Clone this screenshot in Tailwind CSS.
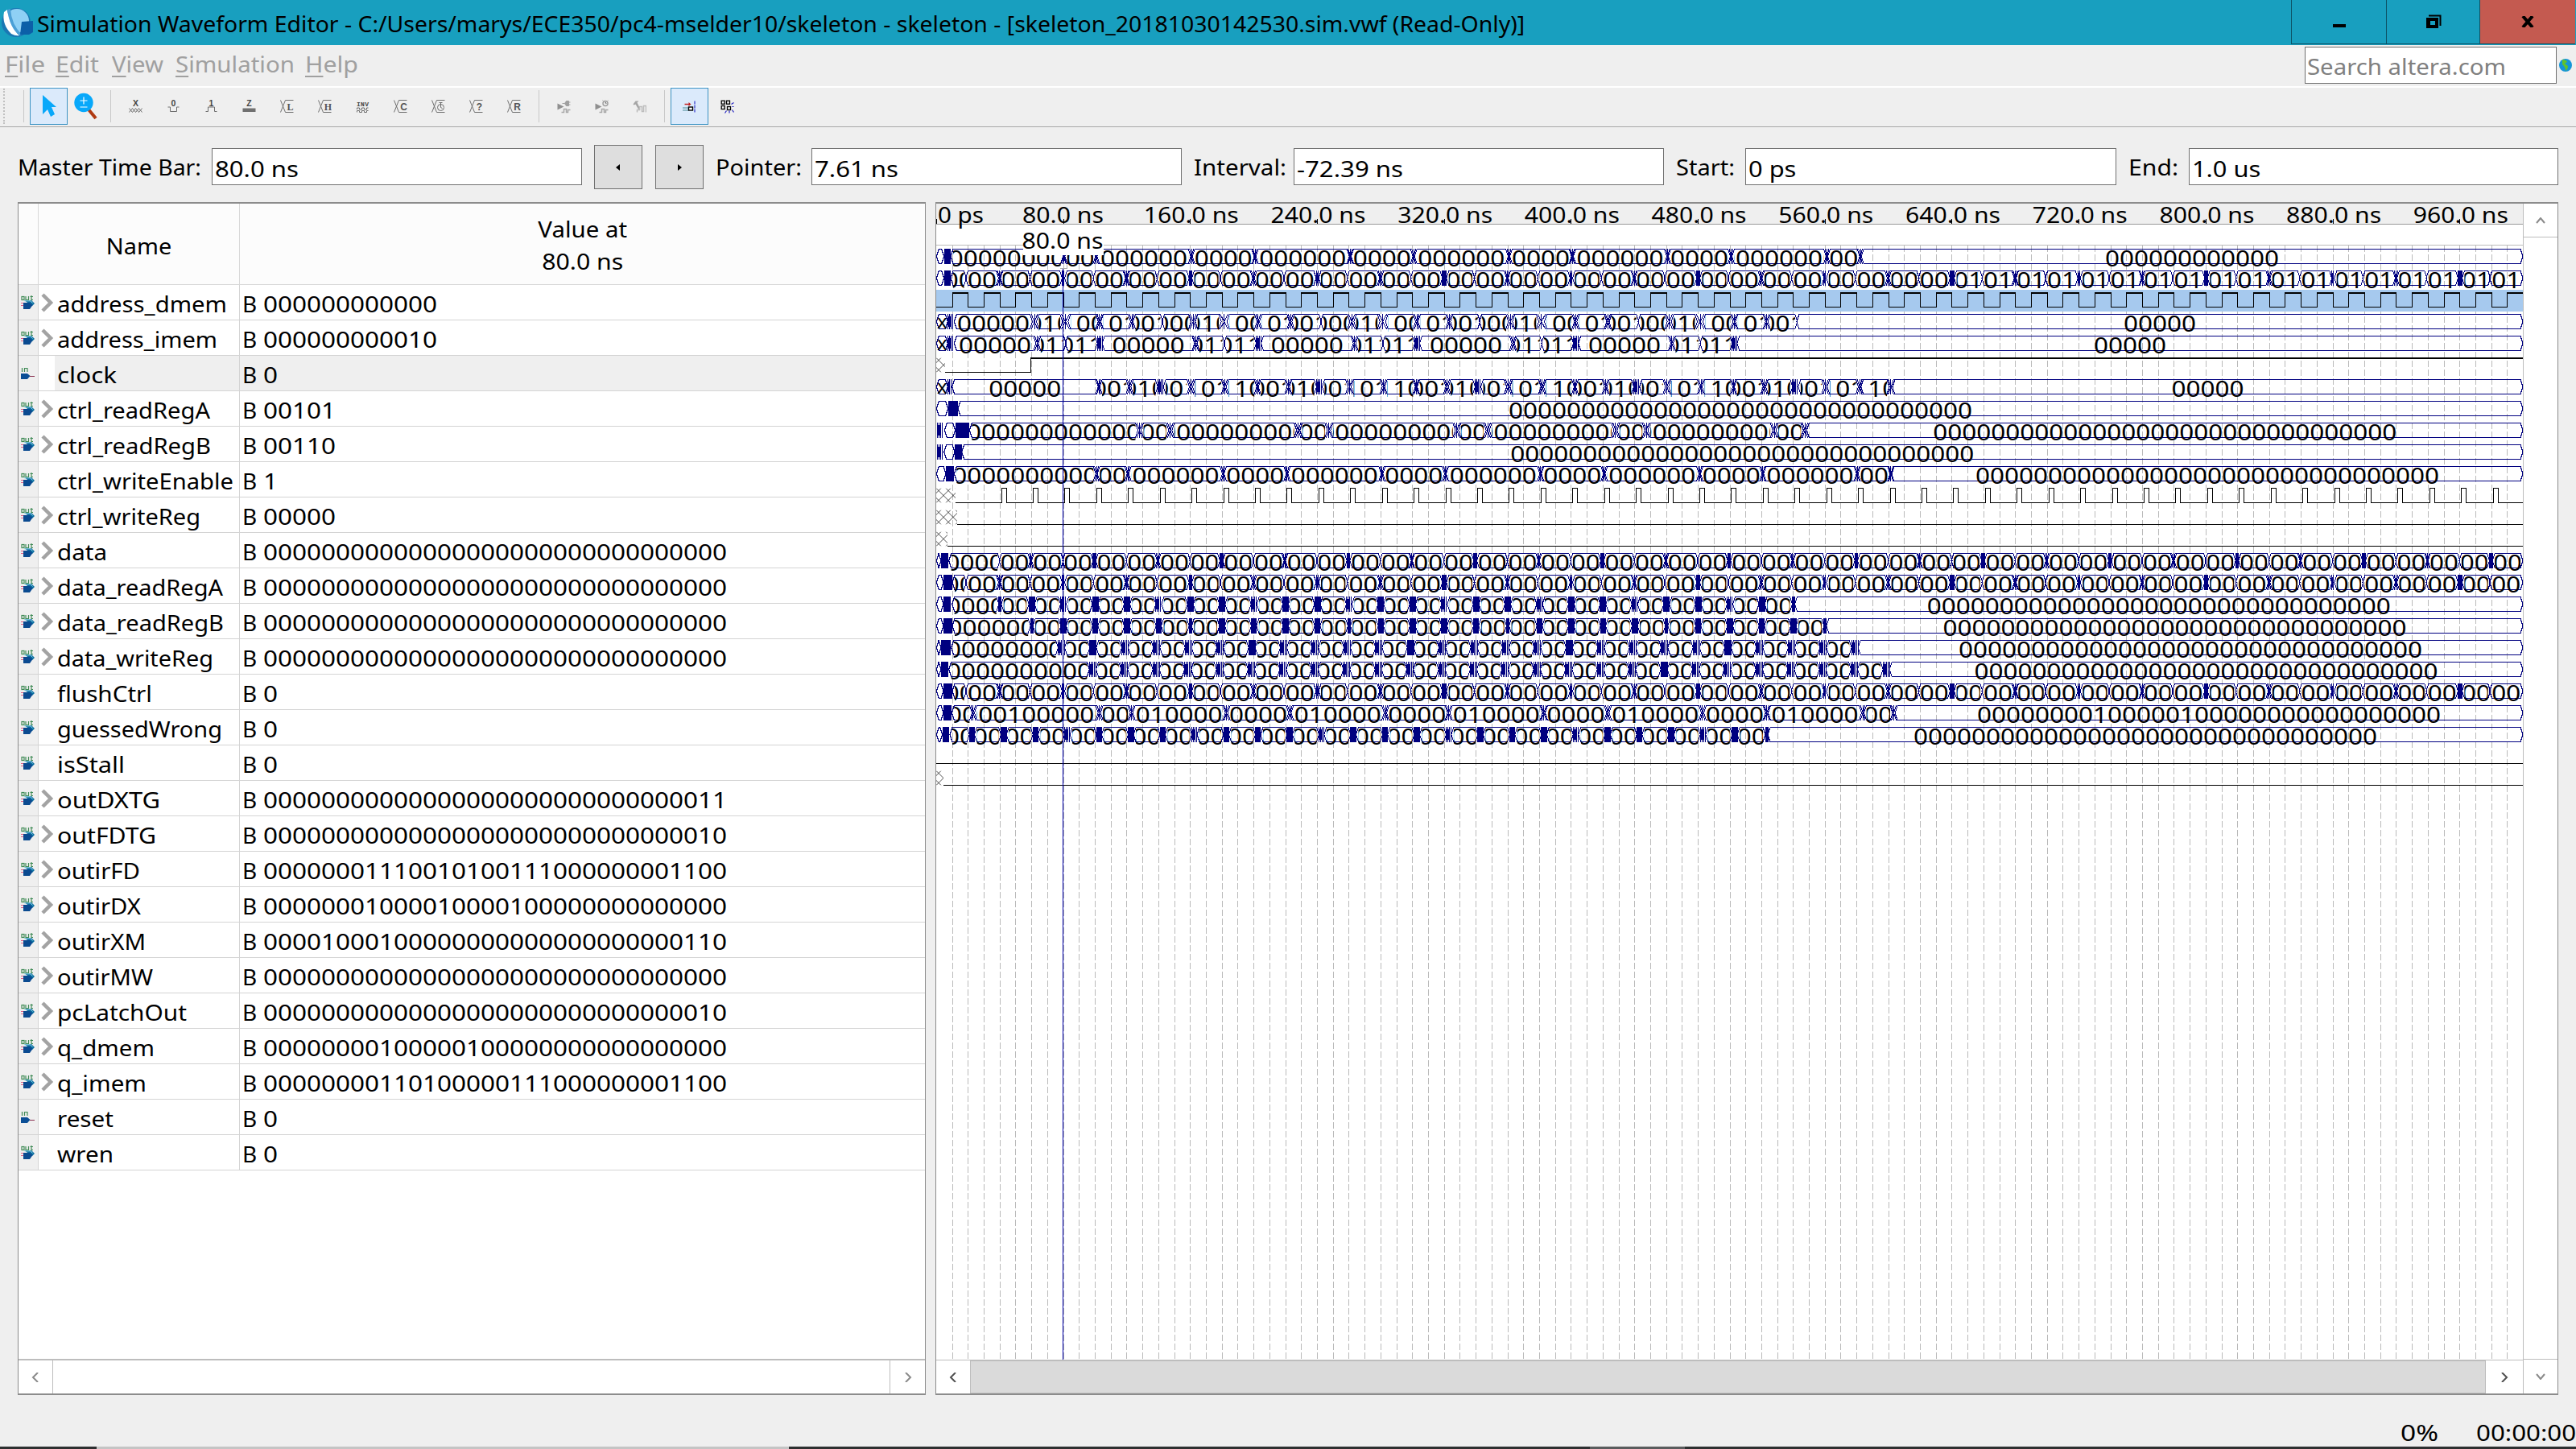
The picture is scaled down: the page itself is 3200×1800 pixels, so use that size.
<!DOCTYPE html>
<html lang="en">
<head>
<meta charset="utf-8">
<title>Simulation Waveform Editor</title>
<script src="https://cdn.jsdelivr.net/npm/@tailwindcss/browser@4"></script>
</head>
<body class="w-[3200px] h-[1800px] overflow-hidden bg-[#efefef] text-black text-[28px] leading-[40px] font-['Noto_Sans',sans-serif] flex flex-col whitespace-pre">

<!-- title bar -->
<header class="h-[56px] shrink-0 bg-[#189fbf] flex items-start">
  <svg class="w-[44px] h-[56px] shrink-0" viewBox="0 0 44 56">
    <ellipse cx="20" cy="28" rx="18" ry="18" fill="#1a78b4"/>
    <ellipse cx="21" cy="26" rx="15" ry="15" fill="#8fd0f5"/>
    <path d="M5 15Q2 30 14 42Q20 45 24 44Q12 34 9 12Z" fill="#fff"/>
    <path d="M9 12Q12 34 24 44L27 43Q14 30 13 11Z" fill="#4b9fd6"/>
    <path d="M27 27L41 26V40L36 43H25Z" fill="#0c5fa8"/>
  </svg>
  <div class="w-[2802px] h-[56px] pl-[2px] pt-[9px]"><span data-w="1848" class="inline-block origin-left">Simulation Waveform Editor - C:/Users/marys/ECE350/pc4-mselder10/skeleton - skeleton - [skeleton_20181030142530.sim.vwf (Read-Only)]</span></div>
  <div class="flex h-[55px] border-b border-l border-[#0d5365]">
    <div class="w-[118px] border-r border-[#0d5365] flex items-center justify-center"><svg class="w-[16px] h-[16px]" viewBox="0 0 16 16"><path d="M0 11h16v4H0z"/></svg></div>
    <div class="w-[116px] border-r border-[#0d5365] flex items-center justify-center"><svg class="w-[20px] h-[18px]" viewBox="0 0 20 18"><path d="M1 4h15v13H1zM6 8v5h6V8z" fill-rule="evenodd"/><path d="M4 1.5H18.5V14" fill="none" stroke="#000" stroke-width="2"/></svg></div>
    <div class="w-[118px] bg-[#c45a50] flex items-center justify-center"><svg class="w-[16px] h-[14px]" viewBox="0 0 16 14"><path d="M2 0L14 14M14 0L2 14" stroke="#000" stroke-width="4"/></svg></div>
  </div>
</header>

<!-- menu bar -->
<nav class="h-[51px] shrink-0 flex text-[#a0a0a0]">
  <div class="w-[63px] pl-[6px] pt-[3px]"><span data-w="50" class="inline-block origin-left"><u class="underline-offset-4">F</u>ile</span></div>
  <div class="w-[68px] pl-[6px] pt-[3px]"><span data-w="54" class="inline-block origin-left"><u class="underline-offset-4">E</u>dit</span></div>
  <div class="w-[80px] pl-[8px] pt-[3px]"><span data-w="64" class="inline-block origin-left"><u class="underline-offset-4">V</u>iew</span></div>
  <div class="w-[161px] pl-[7px] pt-[3px]"><span data-w="148" class="inline-block origin-left"><u class="underline-offset-4">S</u>imulation</span></div>
  <div class="pl-[7px] pt-[3px] w-[2491px]"><span data-w="66" class="inline-block origin-left"><u class="underline-offset-4">H</u>elp</span></div>
  <div class="mt-[2px] w-[313px] h-[46px] bg-white border border-[#707070] text-[#808080] pl-[2px] pt-[3px]"><span data-w="247" class="inline-block origin-left">Search altera.com</span></div>
  <svg class="w-[18px] h-[18px] ml-[2px] mt-[16px]" viewBox="0 0 18 18"><circle cx="9" cy="9" r="8" fill="#1495d8"/><path d="M5 2Q10 2 11 5L8 7L12 10Q12 14 9 16Q9 11 5 8Z" fill="#5fc22e"/></svg>
</nav>

<!-- toolbar -->
<div id="toolbar" class="h-[50px] shrink-0 border-t-2 border-white pb-[2px] flex items-center"></div>
<div class="h-[1px] shrink-0 bg-[#a8a8a8]"></div>

<!-- time fields -->
<div class="h-[93px] shrink-0 flex pt-[22px]">
  <div class="w-[241px] pl-[22px] pt-[7px] mr-[22px]"><span data-w="228" class="inline-block origin-left">Master Time Bar:</span></div>
  <div class="mt-[4px] w-[460px] h-[46px] bg-white border border-[#707070] pl-[3px] pt-[4px]"><span data-w="104" class="inline-block origin-left">80.0 ns</span></div>
  <div class="ml-[15px] w-[60px] h-[55px] bg-[#dedede] border border-[#707070] flex items-center justify-center"><svg class="w-[8px] h-[8px]" viewBox="0 0 8 8"><path d="M6 0V8L1 4z"/></svg></div>
  <div class="ml-[16px] w-[60px] h-[55px] bg-[#dedede] border border-[#707070] flex items-center justify-center"><svg class="w-[8px] h-[8px]" viewBox="0 0 8 8"><path d="M2 0V8L7 4z"/></svg></div>
  <div class="w-[134px] pl-[15px] pt-[7px]"><span data-w="107" class="inline-block origin-left">Pointer:</span></div>
  <div class="mt-[4px] w-[460px] h-[46px] bg-white border border-[#707070] pl-[3px] pt-[4px]"><span data-w="104" class="inline-block origin-left">7.61 ns</span></div>
  <div class="w-[139px] pl-[15px] pt-[7px]"><span data-w="115" class="inline-block origin-left">Interval:</span></div>
  <div class="mt-[4px] w-[460px] h-[46px] bg-white border border-[#707070] pl-[3px] pt-[4px]"><span data-w="132" class="inline-block origin-left">-72.39 ns</span></div>
  <div class="w-[101px] pl-[15px] pt-[7px]"><span data-w="73" class="inline-block origin-left">Start:</span></div>
  <div class="mt-[4px] w-[461px] h-[46px] bg-white border border-[#707070] pl-[3px] pt-[4px]"><span class="inline-block origin-left scale-x-[1.1]">0 ps</span></div>
  <div class="w-[90px] pl-[15px] pt-[7px]"><span data-w="62" class="inline-block origin-left">End:</span></div>
  <div class="mt-[4px] w-[459px] h-[46px] bg-white border border-[#707070] pl-[3px] pt-[4px]"><span class="inline-block origin-left scale-x-[1.1]">1.0 us</span></div>
</div>

<!-- main split -->
<main class="h-[1482px] shrink-0 flex pl-[22px]">
  <section class="w-[1128px] h-[1482px] bg-white border-2 border-l border-r border-[#8c8c8c] flex flex-col">
    <div class="h-[101px] shrink-0 flex bg-[#fcfcfc] border-b border-[#d8d8d8]">
      <div class="w-[25px] border-r border-[#d8d8d8]"></div>
      <div class="w-[250px] border-r border-[#d8d8d8] flex items-center justify-center pt-[3px]"><span class="scale-x-[1.03]">Name</span></div>
      <div class="flex-1 flex flex-col items-center pt-[11px]"><span class="scale-x-[1.05]">Value at</span><span class="scale-x-[1.08]">80.0 ns</span></div>
    </div>
    <div id="rows" class="flex-1 flex flex-col"></div>
    <div class="h-[43px] shrink-0 border-t-2 border-[#bdbdbd] flex">
      <div class="w-[43px] border-r border-[#bdbdbd] flex items-center justify-center"><svg class="w-[10px] h-[12px]" viewBox="0 0 10 12"><path d="M8 0L2 6L8 12" fill="none" stroke="#8a8a8a" stroke-width="2"/></svg></div>
      <div class="flex-1"></div>
      <div class="w-[44px] border-l border-[#bdbdbd] flex items-center justify-center"><svg class="w-[10px] h-[12px]" viewBox="0 0 10 12"><path d="M2 0L8 6L2 12" fill="none" stroke="#8a8a8a" stroke-width="2"/></svg></div>
    </div>
  </section>

  <section class="ml-[12px] w-[2016px] h-[1482px] bg-white border-2 border-l border-r border-[#8c8c8c] flex">
    <div class="w-[1971px] flex flex-col">
      <svg id="wave" shape-rendering="crispEdges" class="w-[1971px] h-[1436px] shrink-0 block" viewBox="1163 253 1971 1436"></svg>
      <div class="flex-1 border-t border-[#bdbdbd] flex">
        <div class="w-[43px] border-r border-[#bdbdbd] flex items-center justify-center"><svg class="w-[10px] h-[12px]" viewBox="0 0 10 12"><path d="M8 0L2 6L8 12" fill="none" stroke="#505050" stroke-width="2"/></svg></div>
        <div class="flex-1 bg-[#dadada] border-y border-[#bdbdbd]"></div>
        <div class="w-[47px] border-l border-[#bdbdbd] flex items-center justify-center"><svg class="w-[10px] h-[12px]" viewBox="0 0 10 12"><path d="M2 0L8 6L2 12" fill="none" stroke="#505050" stroke-width="2"/></svg></div>
      </div>
    </div>
    <div class="flex-1 border-l border-[#bdbdbd] flex flex-col">
      <div class="h-[42px] border-b border-[#bdbdbd] flex items-center justify-center"><svg class="w-[12px] h-[8px]" viewBox="0 0 12 8"><path d="M1 7L6 1L11 7" fill="none" stroke="#8a8a8a" stroke-width="2"/></svg></div>
      <div class="flex-1"></div>
      <div class="h-[43px] border-t border-[#bdbdbd] flex items-center justify-center"><svg class="w-[12px] h-[8px]" viewBox="0 0 12 8"><path d="M1 1L6 7L11 1" fill="none" stroke="#8a8a8a" stroke-width="2"/></svg></div>
    </div>
  </section>
</main>

<!-- status bar -->
<footer class="h-[64px] shrink-0 flex pt-[26px]">
  <div class="w-[2982px]"></div>
  <div class="w-[94px]"><span data-w="47" class="inline-block origin-left">0%</span></div>
  <div><span data-w="124" class="inline-block origin-left">00:00:00</span></div>
</footer>
<div class="h-[3px] shrink-0 flex bg-[#2d2f30]">
  <div class="w-[120px]"></div><div class="w-[860px] bg-[#c4c4c4]"></div><div class="w-[995px]"></div><div class="w-[118px] bg-[#5a5c5d]"></div>
</div>

<script>
// ---------- toolbar ----------
const g = '#6e6e6e';
const X = `<path d="M0 0L6 15M6 0L0 15M6 0H16M6 15H16" stroke="${g}" fill="none"/>`;
const ltr = (c, s) => `<text x="12" y="12" font-size="12" font-weight="700" font-family="${s || 'Liberation Serif'}" text-anchor="middle" fill="#555">${c}</text>`;
const top_ = c => `<text x="8" y="7.5" font-size="10.5" font-weight="700" font-family="Liberation Sans" text-anchor="middle" fill="#444">${c}</text>`;
const icons = {
  x: top_('X') + `<path d="M0 10L4 15L8 10L12 15L16 10M0 15L4 10L8 15L12 10L16 15" stroke="${g}" fill="none"/>`,
  0: top_('0') + `<path d="M1 8.5H4V14H12V8.5H15" stroke="${g}" fill="none"/>`,
  1: top_('1') + `<path d="M1 14H4V8.5H12V14H15" stroke="${g}" fill="none"/>`,
  z: top_('Z') + `<rect y="10" width="16" height="4.5" fill="#707070"/>`,
  L: X + ltr('L'), H: X + ltr('H'),
  inv: `<text x="8" y="7" font-size="8" font-weight="700" font-family="Liberation Mono" text-anchor="middle" textLength="15" fill="#444">INV</text><path d="M1 11.5V9.5H4V11.5H7V9.5H10V11.5H13V9.5H15M1 15V13H4V15H7V13H10V15H13V13H15" stroke="${g}" fill="none"/>`,
  C: X + ltr('C', 'Liberation Sans'),
  t: X + `<circle cx="11" cy="9" r="4" fill="none" stroke="${g}"/><path d="M11 3V9L13 10M9 3H13" stroke="${g}" fill="none"/>`,
  q: X + ltr('?', 'Liberation Sans'), R: X + ltr('R', 'Liberation Sans'),
  s1: `<path d="M0 4L8 8L0 12Z" fill="#909090"/><path d="M6 4H9L11 1H14V7H11L9 4M14 2.5H16M14 5.5H16" fill="#a0a0a0" stroke="#a0a0a0"/><path d="M5 15H8V11H11V15H13V12H16" fill="none" stroke="#a8a8a8" stroke-width="1.5"/>`,
  s2: `<path d="M0 4L8 8L0 12Z" fill="#909090"/><circle cx="12.5" cy="4" r="3" fill="none" stroke="#a0a0a0" stroke-width="1.5"/><path d="M9 0L10 1M16 0L15 1M12.5 2V4H14" stroke="#a0a0a0"/><path d="M5 15H8V11H11V15H13V12H16" fill="none" stroke="#a8a8a8" stroke-width="1.5"/>`,
  s3: `<path d="M0 5L3 1H7L5 3L9 11L7 12L3 5L1 6Z" fill="#a5a5a5"/><path d="M5 15V12H8V8H11V14H13V7H16V15" fill="none" stroke="#bdbdbd" stroke-width="1.5"/>`,
  snap: `<path d="M2 5H8" stroke="#c02020" stroke-width="1.5"/><path d="M7 2.5L10 5L7 7.5Z" fill="#c02020"/><path d="M0 9.5H8M0 12.5H8" stroke="#1d6b78" stroke-width="1.5" stroke-dasharray="1 1"/><rect x="7" y="8.5" width="5" height="4" fill="#fff" stroke="#000" stroke-width="1.4"/><path d="M14.5 1V16" stroke="#1010c0" stroke-dasharray="4 1"/>`,
  grid: `<g fill="none" stroke="#000" stroke-width="1.3"><rect x=".7" y=".7" width="4" height="4"/><rect x="7" y=".7" width="4" height="4"/><rect x=".7" y="7" width="4" height="4"/><rect x="8" y="8" width="4" height="4"/></g><path d="M13 5L16 3M14 8H16M14 12L16 15M10.5 13V16M7 13L5 16" stroke="#2020c0" stroke-width="1.2"/>`
};
const ic = (k) => `<div class="w-[47px] h-[46px] flex items-center justify-center"><svg class="w-[17px] h-[17px]" viewBox="-0.5 -0.5 17 17">${icons[k]}</svg></div>`;
const sep = (c) => `<div class="w-px h-[40px] bg-[#c8c8c8] ${c}"></div>`;
document.getElementById('toolbar').innerHTML =
  `<div class="ml-[4px] h-[44px] w-px border-l-2 border-dotted border-[#c0c0c0]"></div>` + sep('ml-[23px] mr-[7px]') +
  `<div class="w-[47px] h-[46px] bg-[#dbeafb] border border-[#3c93c4] flex items-center justify-center"><svg class="w-[18px] h-[28px]" viewBox="0 0 18 28"><path d="M1 0L18 15H12L16 24L11 27L7 18L1 24Z" fill="#08a8fa"/></svg></div>
   <svg class="ml-[8px] w-[30px] h-[34px]" viewBox="0 0 30 34"><path d="M18 21L27 32" stroke="#b03a12" stroke-width="4"/><circle cx="12" cy="12.5" r="11.7" fill="#08a8fa"/><path d="M7.5 10H16.5M12 5.5V14.5M7.5 18H16.5" stroke="#fff" stroke-width="1.2"/></svg>` +
  sep('ml-[15px] mr-[7px]') + ['x','0','1','z','L','H','inv','C','t','q','R'].map(ic).join('') +
  sep('ml-[7px] mr-[7px]') + ['s1','s2','s3'].map(ic).join('') + sep('ml-[7px] mr-[7px]') +
  `<div class="w-[47px] h-[46px] bg-[#dbeafb] border border-[#3c93c4] flex items-center justify-center"><svg class="w-[17px] h-[17px]" viewBox="-0.5 -0.5 17 17">${icons.snap}</svg></div>` + ic('grid');

// ---------- signal table: name, value, label width, expandable, input ----------
const Z = n => '0'.repeat(n);
const signals = [
  ['address_dmem', Z(12), 211, 1], ['address_imem', '000000000010', 199, 1], ['clock', '0', 74, 0, 1], ['ctrl_readRegA', '00101', 190, 1],
  ['ctrl_readRegB', '00110', 191, 1], ['ctrl_writeEnable', '1', 219, 0], ['ctrl_writeReg', '00000', 178, 1], ['data', Z(32), 62, 1],
  ['data_readRegA', Z(32), 206, 1], ['data_readRegB', Z(32), 207, 1], ['data_writeReg', Z(32), 194, 1], ['flushCtrl', '0', 118, 0],
  ['guessedWrong', '0', 205, 0], ['isStall', '0', 84, 0], ['outDXTG', Z(30) + '11', 128, 1], ['outFDTG', Z(30) + '10', 123, 1],
  ['outirFD', '00000001110010100111000000001100', 103, 1], ['outirDX', '00000001000010000100000000000000', 104, 1],
  ['outirXM', '00001000100000000000000000000110', 110, 1], ['outirMW', Z(32), 119, 1], ['pcLatchOut', Z(30) + '10', 161, 1],
  ['q_dmem', '00000000100000100000000000000000', 121, 1], ['q_imem', '00000000110100000111000000001100', 111, 1],
  ['reset', '0', 70, 0, 1], ['wren', '0', 70, 0]
];
const outIcon = `<svg class="w-[18px] h-[18px]" viewBox="0 0 18 18"><g fill="none" stroke="#3f8a55" stroke-width="1.2"><rect x="1" y="1.5" width="3" height="4"/><path d="M6 1V5.5H9.5V1M13 0V5.5H15M11.5 1.5H15"/></g><path d="M4 6H13L17 10L14 13Z" fill="#0b6ea0"/><path d="M4 6.800H12L14.500 9.500" fill="none" stroke="#9fdcec"/><path d="M3 9H11L14.5 12L11 17H3Z" fill="#0a4a90"/><path d="M0 9.5H3M0 12.5H3" stroke="#e0608a"/></svg>`;
const inIcon = `<svg class="w-[18px] h-[18px]" viewBox="0 0 18 18"><path d="M1.5 2V7M4.5 7V2.5H8V7" stroke="#3f8a55" fill="none" stroke-width="1.2"/><path d="M0 9H8L11.5 12L8 16H0Z" fill="#0b4f96"/><path d="M11 12.5H17" stroke="#8a3050"/></svg>`;
document.getElementById('rows').innerHTML = signals.map(([n, v, w, expandable, inp]) => {
  const sel = n === 'clock' ? 'bg-[#efefef]' : '';
  return `<div class="h-[44px] shrink-0 flex border-b border-[#d4d4d4]">
    <div class="w-[25px] bg-[#efefef] border-r border-[#d4d4d4] pl-[3px] pt-[13px]">${inp ? inIcon : outIcon}</div>
    <div class="w-[20px] pt-[10px] pl-[3px]">${expandable ? '<svg class="w-[16px] h-[24px]" viewBox="0 0 16 24"><path d="M2 2L12 12L2 22" fill="none" stroke="#a3a3a3" stroke-width="4.5"/></svg>' : ''}</div>
    <div class="w-[230px] ${sel} border-r border-[#d4d4d4] pl-[3px] pt-[3px]"><span class="inline-block origin-left" data-w="${w}">${n}</span></div>
    <div class="flex-1 ${sel} pl-[3px] pt-[3px] flex"><span class="w-[26px]">B</span><span class="inline-block origin-left" data-w="${v.length * 18}">${v}</span></div>
  </div>`;
}).join('');

// ---------- waveform ----------
const px = t => 1162.8 + 1.9714 * t, END = 1000, out = [];
const rowTop = r => 309.5 + 27 * r;
const navy = '#000080';
for (let t = 10; t < END; t += 10) {
  const x = Math.round(px(t)) + .5;
  out.push(`<path d="M${x} 305V1689" stroke="#bababa" stroke-dasharray="8 3"/>`);
}
const label = (x, y, s, w, a = 'middle') => `<text x="${x}" y="${y}" text-anchor="${a}" textLength="${w}" lengthAdjust="spacingAndGlyphs">${s}</text>`;
function seg(r, a, b, s) {
  const y = rowTop(r), m = y + 9, e = y + 18;
  out.push(`<path d="M${a} ${m}L${a + 3} ${y}H${b - 3}L${b} ${m}L${b - 3} ${e}H${a + 3}Z" fill="none" stroke="${navy}"/>`);
  if (!s) return;
  const w = b - a - 6;
  let drop = 0;
  while ((s.length - 2 * drop - 2) * 18 >= w) drop++;
  if (drop) s = s.slice(drop, s.length - drop);
  out.push(`<svg x="${a + 3}" y="${y - 1}" width="${w}" height="24" overflow="hidden">${label(w / 2, 22.3, s, s.length * 18)}</svg>`);
}
function glitch(r, x, w, kind) {
  const y = rowTop(r) - .5, h = 19;
  if (w <= 0) return;
  if (kind === 'b') {
    out.push(`<rect x="${x - w / 2}" y="${y}" width="${w}" height="${h}" fill="${navy}"/>`);
  } else if (kind === 's') {
    const n = Math.max(2, Math.round(w / 2));
    for (let i = 0; i < n; i++) out.push(`<rect x="${Math.round(x - w / 2 + i * 2)}" y="${y}" width="1" height="${h}" fill="${navy}"/>`);
    out.push(`<rect x="${Math.round(x - w / 2)}" y="${y + 3}" width="${w * .5}" height="13" fill="${navy}"/>`);
  } else {
    out.push(`<path d="M${x - w / 2 - 1} ${y}L${x + w / 2 + 1} ${y + h}M${x + w / 2 + 1} ${y}L${x - w / 2 - 1} ${y + h}M${x} ${y}V${y + h}" stroke="${navy}" fill="none"/>`);
  }
}
// start: px of the first value; trs: [time, gap, kind]; val: text of the i-th value
function bus(r, start, trs, val) {
  let a = start;
  trs.forEach(([t, w, k], i) => {
    const x = px(t);
    seg(r, a, x - w / 2 + .5, val(i)); glitch(r, x, w, k); a = x + w / 2 - .5;
  });
  seg(r, a, 3134, val(trs.length));
}
function lead(r, parts) {
  parts.forEach(([k, a, b, s]) => {
    const A = 1150 + a / 3, B = 1150 + b / 3;
    if (k === 'h') seg(r, A, B); else glitch(r, (A + B) / 2, B - A, k);
    if (s) out.push(`<text x="${(A + B) / 2}" y="${rowTop(r) + 17}" text-anchor="middle" font-size="24">x</text>`);
  });
}
const at = c => 1150 + c / 3;
const range = (a, b, s, f) => { const o = []; for (let t = a; t <= b + 1; t += s) o.push(f(t, o.length)); return o; };
const z12 = Z(12), z32 = Z(32), z5 = Z(5);

out.push(`<rect x="1163" y="359.5" width="1971" height="27.5" fill="#a6c9ee"/>`);
{ // clock
  let d = `M1163 381.5H${px(10)}`, hi = '';
  for (let t = 10; t < END; t += 20) {
    const a = Math.round(px(t)) + .5, b = Math.round(Math.min(px(t + 10), 3134)) + .5, c = Math.min(px(t + 20), 3134);
    d += `M${a} 382V364M${b} 364V382`; if (b < 3134) d += `M${b} 381.5H${c}`; hi += `M${a - .5} 364H${b + .5}`;
  }
  out.push(`<path d="${d}" stroke="#000" fill="none"/><path d="${hi}" stroke="#000" stroke-width="2"/>`);
}
lead(0, [['h', 40, 68], ['b', 68, 92]]);
bus(0, at(93), [80.6, 101, 161, 201, 261, 301, 361, 401, 461, 501, 561.4, 582.5].map(t => [t, 3, 'x']), () => z12);

const addr = () => [[18.9, 0, 'x']].concat(range(40, 980, 20, t => {
  const k = Math.round(t / 20);
  if (k % 2) return [t - .8, 0, 'x'];
  if (k % 16 === 0) return [t + .3, 6, 'b'];
  if (k % 8 === 0) return [t + .3, 4.5, 'b'];
  if (k % 4 === 0) return [t + .3, 4, 's'];
  return [t, 3, 'x'];
}));
lead(1, [['h', 40, 68], ['b', 68, 92]]);
bus(1, at(93), addr(), i => i >= 32 ? '000000100000' : z12);

lead(3, [['h', 40, 82, 'x'], ['s', 82, 106]]);
{
  const tr = [], o = [[62, 6, 'x'], [81.5, 8, 'x'], [103, 4, 'x'], [123.4, 4, 'x'], [142.6, 0, 'x']];
  for (let k = 0; k < 5; k++) o.forEach(([t, w, q]) => { if (t + 100 * k < 545) tr.push([t + 100 * k, w, q]); });
  const v = ['00100', '01000', '01010', '00010', '00000'];
  bus(3, at(106), tr, i => i === 0 || i === tr.length ? z5 : v[(i - 1) % 5]);
}
lead(4, [['h', 40, 82, 'x'], ['s', 82, 106]]);
{
  const tr = [], v = ['00110', '00110', z5];
  for (let k = 0; k < 5; k++) tr.push([63.7 + 100 * k, 4, 'x'], [81.7 + 100 * k, 0, 'x'], [103.2 + 100 * k, 7, 's']);
  bus(4, at(106), tr, i => i === 0 ? z5 : v[(i - 1) % 3]);
}
lead(6, [['h', 40, 82, 'x'], ['s', 82, 98]]);
{
  const tr = [], v = ['00010', '00100', '00010', '01010', '01100'], o = [102.6, 122, 141.5, 160.6, 182], w = [3, 4, 8, 5, 4];
  for (let k = 0; k < 5; k++) o.forEach((t, j) => tr.push([t + 100 * k, w[j], j === 2 ? 's' : 'x']));
  tr.push([601.7, 5, 'x']);
  bus(6, at(98), tr, i => i === 0 || i === tr.length ? z5 : v[(i - 1) % 5]);
}
lead(7, [['h', 40, 83], ['b', 83, 120]]);
bus(7, at(120), [], () => z32);
lead(8, [['s', 42, 68], ['h', 70, 110], ['b', 110, 163]]);
{
  const tr = []; for (let k = 1; k < 6; k++) tr.push([100 * k + 28.2, 5, 'x'], [100 * k + 47.6, 5, 'x']);
  bus(8, at(163), tr, () => z32);
}
lead(9, [['s', 42, 68], ['h', 68, 108], ['b', 108, 134]]);
bus(9, at(134), [], () => z32);
lead(10, [['h', 40, 75], ['b', 75, 106]]);
bus(10, at(106), [101.2, 120.9, 181, 221.2, 281, 321, 381, 421, 481.3, 521, 580.5, 601.7].map(t => [t, 3, 'x']), () => z32);

lead(14, [['h', 40, 57], ['b', 57, 84]]);
bus(14, at(86), range(40, 980, 20, t => { const k = Math.round(t / 20); return k % 2 === 0 ? [t, 0, 'x'] : k % 4 === 1 ? [t - .2, 4.5, 'b'] : [t - .2, 2.5, 'x']; }), () => z32);
lead(15, [['h', 40, 66], ['b', 66, 98]]); bus(15, at(99), addr(), () => z32);
lead(16, [['h', 40, 66], ['b', 66, 92]]); bus(16, at(98), range(40, 540, 20, (t, i) => [t + .3, i === 0 || i === 25 ? 4 : 8, i % 3 === 2 ? 's' : 'b']), () => z32);
lead(17, [['h', 40, 66], ['b', 66, 98]]); bus(17, at(99), range(60, 560, 20, (t, i) => [t + .3, i % 5 === 0 ? 4 : 7.5, 'b']), () => z32);
lead(18, [['h', 40, 57], ['b', 57, 92]]); bus(18, at(95), range(79, 579, 20, (t, i) => [t, 9, i % 5 === 1 ? 'b' : 's']), () => z32);
lead(19, [['h', 40, 57], ['b', 57, 84]]); bus(19, at(86), range(98.7, 598.8, 20, (t, i) => [t, 9, i === 18 ? 'b' : 's']), () => z32);
lead(20, [['h', 40, 66], ['b', 66, 98]]); bus(20, at(99), addr(), () => z32);
lead(21, [['h', 40, 66], ['b', 66, 96]]);
{
  const q = '00000000100000100000000000000000';
  bus(21, at(97), [23.4, 102.9, 123.2, 183, 223, 283.2, 323, 383, 423.3, 483, 523.5, 584, 603.5].map(t => [t, 4, 'x']),
    i => i % 2 ? q : z32);
}
lead(22, [['h', 40, 62], ['b', 62, 88]]); bus(22, at(90), range(22.6, 523.4, 20.03, (t, i) => [t, i === 25 ? 4 : 7.5, i % 4 === 3 ? 's' : 'b']), () => z32);

// single-bit signals
const hatch = (r, to) => {
  const y = rowTop(r), n = to - 1163;
  let d = '';
  for (let k = -2; k < 5; k++) d += `M${1151 + 12 * k} ${y}l18 18M${1169 + 12 * k} ${y}l-18 18`;
  out.push(`<svg x="1163" y="${y}" width="${n}" height="18" viewBox="1163 ${y} ${n} 18" overflow="hidden"><path d="${d}" stroke="#222" stroke-width=".8" shape-rendering="auto" fill="none"/></svg>`);
};
const low = (r, a, b = 3134) => out.push(`<path d="M${a} ${rowTop(r) + 18}H${b}" stroke="#000"/>`);
hatch(5, 1174); low(5, 1174, 1280.5);
out.push(`<path d="M1280.5 463V445" stroke="#000"/><path d="M1280 445H3134" stroke="#000" stroke-width="2"/>`);
hatch(11, 1187);
{
  const y = rowTop(11); let d = `M1187 ${y + 18}`;
  for (let t = 41; t < 990; t += 20) { const a = Math.round(px(t)) + .5, b = a + 6; d += `H${a}V${y}H${b}V${y + 18}`; }
  out.push(`<path d="${d}H3134" stroke="#000" fill="none"/>`);
}
hatch(12, 1189); low(12, 1189);
hatch(13, 1177); low(13, 1177);
low(23, 1163);
hatch(24, 1172); low(24, 1172);

// ruler
out.push(`<rect x="1163" y="253" width="1971" height="25" fill="#efefef"/><rect x="1163" y="279" width="1971" height="25" fill="#fff"/><path d="M1163 278.5H3134" stroke="#999"/><path d="M1163 304.5H3134" stroke="#bbb"/>`);
out.push(label(1165, 276.5, '0 ps', 57, 'start'));
for (let t = 80; t < END; t += 80) out.push(label(px(t) + (t > 80 ? 1.5 : 0), 276.5, t + '.0 ns', t > 80 ? 118 : 101));
for (let t = 0; t < END; t += 80) out.push(`<path d="M${Math.round(px(t)) + .5} 272V278" stroke="#000"/>`);
// master time bar
out.push(`<rect x="1271" y="288" width="100" height="29" fill="#fff"/>` + label(1320, 309, '80.0 ns', 101));
out.push(`<path d="M1320.5 333V1689" stroke="#0000a8"/><path d="M1317 333.5H1325.5V328" stroke="#aaa" fill="none"/>`);
document.getElementById('wave').innerHTML = out.join('');

// stretch labels to their set widths
const measure = document.createElement('canvas').getContext('2d');
measure.font = '28px "Noto Sans"';
document.querySelectorAll('[data-w]').forEach(e => {
  e.style.transform = `scaleX(${e.dataset.w / measure.measureText(e.textContent).width})`;
});
</script>
</body>
</html>
